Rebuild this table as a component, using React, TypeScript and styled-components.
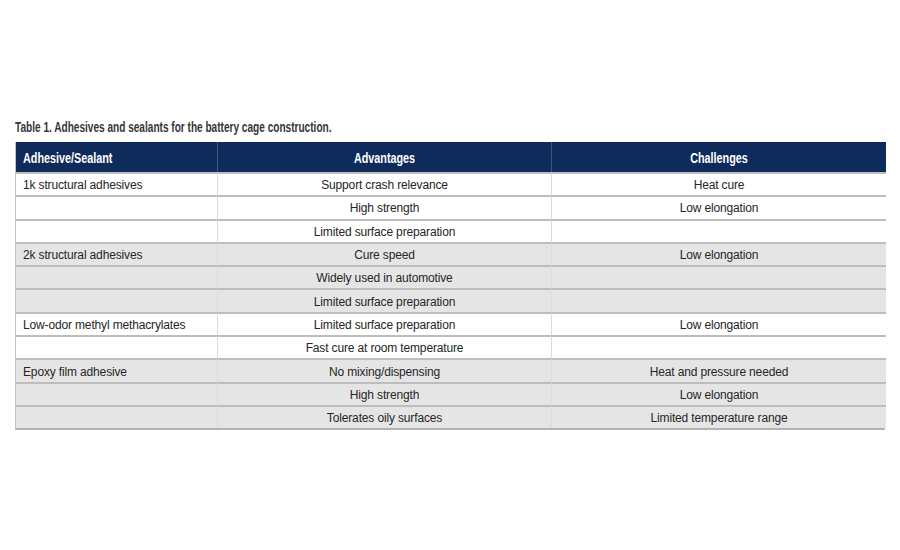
import styled, { createGlobalStyle } from "styled-components";

const GlobalStyle = createGlobalStyle`
  body {
    margin: 0;
    background: #ffffff;
  }
`;

const Page = styled.div`
  width: 900px;
  height: 550px;
  padding: 119px 15px 0 15px;
  box-sizing: border-box;
  background: #fff;
`;

// no condensed face installed, so the bold captions are squeezed horizontally
const Squeeze = styled.span<{ $origin: string; $scale: number }>`
  display: inline-block;
  white-space: nowrap;
  transform: scaleX(${(p) => p.$scale});
  transform-origin: ${(p) => p.$origin};
`;

const Caption = styled.div`
  font-family: "Liberation Sans", Arial, sans-serif;
  font-weight: bold;
  font-size: 14px;
  color: #363636;
  height: 23px;
  line-height: 17px;
`;

const Table = styled.div`
  display: grid;
  grid-template-columns: 201px 334px 335px;
  border-left: 1px solid #c4c4c4;
  border-right: 1px solid #c4c4c4;
  border-bottom: 2px solid #b3b3b3;
  width: 870px;
  box-sizing: border-box;
`;

const HeadCell = styled.div<{ $align: string }>`
  background: #0f2b5b;
  color: #fff;
  height: 30px;
  display: flex;
  align-items: center;
  justify-content: ${(p) => p.$align};
  padding: 1px 7px 0;
  box-sizing: border-box;
  font-family: "Liberation Sans", Arial, sans-serif;
  font-weight: bold;
  font-size: 15px;
  border-left: 1px solid #3c5680;
  &:first-child {
    border-left: none;
  }
`;

const Cell = styled.div<{ $align: string; $shade: boolean; $first: boolean }>`
  background: ${(p) => (p.$shade ? "#e6e5e6" : "#ffffff")};
  height: 23.3px;
  box-sizing: border-box;
  border-top: 2px solid #bdbdbd;
  border-left: ${(p) => (p.$first ? "none" : "1px solid #dcdcdc")};
  display: flex;
  align-items: center;
  justify-content: ${(p) => p.$align};
  padding: 1px 7px 0;
  font-family: "Liberation Sans", Arial, sans-serif;
  font-size: 12px;
  letter-spacing: -0.15px;
  color: #252525;
  white-space: nowrap;
`;

const rows: [string, string, string, boolean][] = [
  ["1k structural adhesives", "Support crash relevance", "Heat cure", false],
  ["", "High strength", "Low elongation", false],
  ["", "Limited surface preparation", "", false],
  ["2k structural adhesives", "Cure speed", "Low elongation", true],
  ["", "Widely used in automotive", "", true],
  ["", "Limited surface preparation", "", true],
  ["Low-odor methyl methacrylates", "Limited surface preparation", "Low elongation", false],
  ["", "Fast cure at room temperature", "", false],
  ["Epoxy film adhesive", "No mixing/dispensing", "Heat and pressure needed", true],
  ["", "High strength", "Low elongation", true],
  ["", "Tolerates oily surfaces", "Limited temperature range", true],
];

export default function App() {
  return (
    <Page>
      <GlobalStyle />
      <Caption>
        <Squeeze $origin="left" $scale={0.72}>
          Table 1. Adhesives and sealants for the battery cage construction.
        </Squeeze>
      </Caption>
      <Table>
        <HeadCell $align="flex-start">
          <Squeeze $origin="left" $scale={0.72}>Adhesive/Sealant</Squeeze>
        </HeadCell>
        <HeadCell $align="center">
          <Squeeze $origin="center" $scale={0.72}>Advantages</Squeeze>
        </HeadCell>
        <HeadCell $align="center">
          <Squeeze $origin="center" $scale={0.72}>Challenges</Squeeze>
        </HeadCell>
        {rows.map(([a, b, c, shade], i) => [
          <Cell key={`a${i}`} $align="flex-start" $shade={shade} $first>
            {a}
          </Cell>,
          <Cell key={`b${i}`} $align="center" $shade={shade} $first={false}>
            {b}
          </Cell>,
          <Cell key={`c${i}`} $align="center" $shade={shade} $first={false}>
            {c}
          </Cell>,
        ])}
      </Table>
    </Page>
  );
}
